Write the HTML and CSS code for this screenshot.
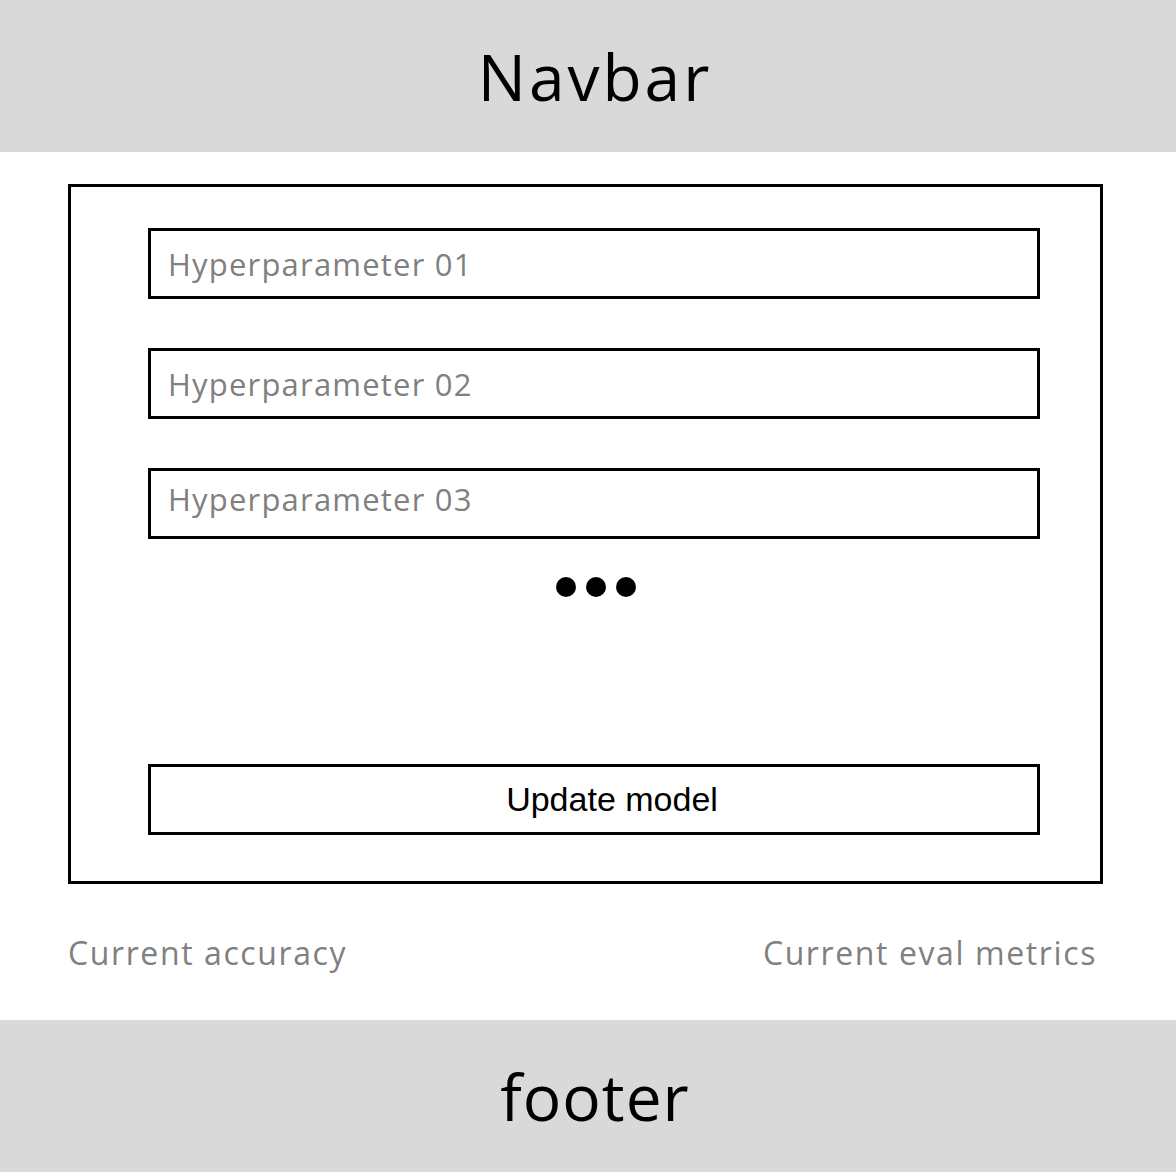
FILE: index.html
```html
<!DOCTYPE html>
<html>
<head>
<link rel="stylesheet" href="styles.css">
</head>
<body>
<div class="navbar">Navbar</div>

<div class="main">
    <div class="panel">
        <div class="fields">
            <input class="field" type="text" placeholder="Hyperparameter 01">
            <input class="field" type="text" placeholder="Hyperparameter 02">
            <input class="field field-raised" type="text" placeholder="Hyperparameter 03">
        </div>
        <div class="more">
            <span class="dot"></span>
            <span class="dot"></span>
            <span class="dot"></span>
        </div>
        <button class="update">Update model</button>
    </div>

    <div class="stats">
        <div class="stat">Current accuracy</div>
        <div class="stat">Current eval metrics</div>
    </div>
</div>

<div class="footer">footer</div>
</body>
</html>
```

FILE: styles.css
```css
body {
    margin: 0;
    font-family: 'Open Sans', 'Liberation Sans', sans-serif;
    color: #000;
    background-color: #fff;
}

.navbar,
.footer {
    display: flex;
    align-items: center;
    justify-content: center;
    height: 152px;
    padding-left: 14px;
    box-sizing: border-box;
    background-color: #d9d9d9;
    font-size: 64px;
}

.navbar {
    letter-spacing: 3px;
}

.footer {
    letter-spacing: 1px;
}

.main {
    display: flex;
    flex-direction: column;
    height: 868px;
    padding: 32px 73px 0 68px;
    box-sizing: border-box;
}

.panel {
    display: flex;
    flex-direction: column;
    height: 700px;
    padding: 41px 60px 0 77px;
    border: 3px solid #000;
    box-sizing: border-box;
}

.fields {
    display: flex;
    flex-direction: column;
    gap: 49px;
}

.field {
    height: 71px;
    padding: 0 17px;
    border: 3px solid #000;
    border-radius: 0;
    box-sizing: border-box;
    font-family: 'Open Sans', sans-serif;
    font-size: 31px;
    letter-spacing: 1.2px;
    outline: none;
}

.field-raised {
    padding-bottom: 9px;
}

.field::placeholder {
    color: #808080;
}

.more {
    display: flex;
    justify-content: center;
    gap: 10px;
    margin-top: 38px;
    padding-left: 4px;
}

.dot {
    width: 20px;
    height: 20px;
    border-radius: 50%;
    background-color: #000;
}

.update {
    height: 71px;
    margin-top: 167px;
    padding-left: 42px;
    border: 3px solid #000;
    border-radius: 0;
    background-color: #fff;
    font-family: 'Liberation Sans', Arial, sans-serif;
    font-size: 34px;
    color: #000;
}

.stats {
    flex: 1;
    display: flex;
    align-items: center;
    justify-content: space-between;
    padding-right: 6px;
}

.stat {
    font-size: 32px;
    letter-spacing: 1.6px;
    color: #808080;
}
```
